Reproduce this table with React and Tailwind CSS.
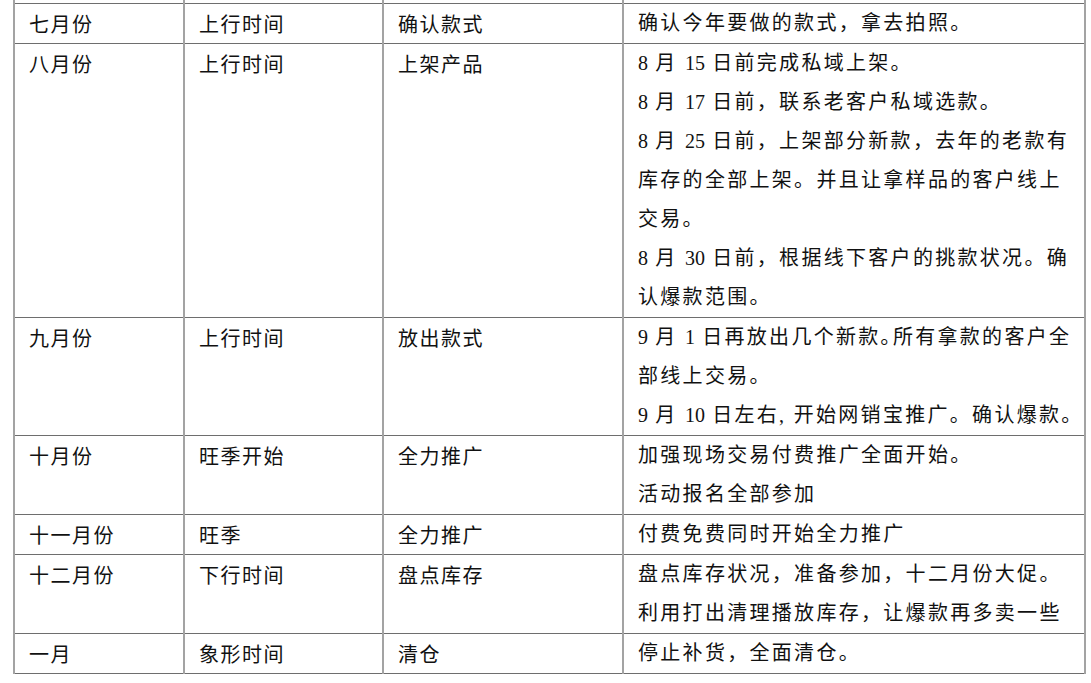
import React from "react";

const rows = [
    { month: "七月份", phase: "上行时间", task: "确认款式", notes: ["确认今年要做的款式，拿去拍照。"] },
    {
        month: "八月份",
        phase: "上行时间",
        task: "上架产品",
        notes: [
            "8 月 15 日前完成私域上架。",
            "8 月 17 日前，联系老客户私域选款。",
            "8 月 25 日前，上架部分新款，去年的老款有",
            "库存的全部上架。并且让拿样品的客户线上",
            "交易。",
            "8 月 30 日前，根据线下客户的挑款状况。确",
            "认爆款范围。",
        ],
    },
    {
        month: "九月份",
        phase: "上行时间",
        task: "放出款式",
        notes: [
            "9 月 1 日再放出几个新款｡所有拿款的客户全",
            "部线上交易。",
            "9 月 10 日左右, 开始网销宝推广。确认爆款。",
        ],
    },
    { month: "十月份", phase: "旺季开始", task: "全力推广", notes: ["加强现场交易付费推广全面开始。", "活动报名全部参加"] },
    { month: "十一月份", phase: "旺季", task: "全力推广", notes: ["付费免费同时开始全力推广"] },
    {
        month: "十二月份",
        phase: "下行时间",
        task: "盘点库存",
        notes: ["盘点库存状况，准备参加，十二月份大促。", "利用打出清理播放库存，让爆款再多卖一些"],
    },
    { month: "一月", phase: "象形时间", task: "清仓", notes: ["停止补货，全面清仓。"] },
];

const cell = "border-l-2 border-b border-l-[#a3a3a3] border-b-[#6e6e6e] align-top pl-[14px] pr-2 py-0";
const sans = "font-['Noto_Sans_CJK_SC',sans-serif] tracking-[1.5px]";
const serif = "font-['Liberation_Serif','Noto_Sans_CJK_SC',serif] tracking-[2.3px]";

// digits in the notes column sit tighter than the Chinese text
const Note = ({ text }) => (
    <div>
        {text.split(/(\d+)/).map((part, k) =>
            /^\d+$/.test(part) ? (
                <span key={k} className="tracking-normal">{part}</span>
            ) : (
                <React.Fragment key={k}>{part}</React.Fragment>
            )
        )}
    </div>
);

export default function App() {
    return (
        <div className="w-[1091px] h-[683px] bg-white overflow-hidden pl-[13px]">
            <table className="border-collapse text-[20px] leading-[39px] text-[#111] table-fixed w-[1071px]">
                <colgroup>
                    <col className="w-[170px]" />
                    <col className="w-[199px]" />
                    <col className="w-[240px]" />
                    <col className="w-[462px]" />
                </colgroup>
                <tbody>
                    {/* cut-off row above */}
                    <tr className="h-[3px]">
                        <td className="border-l-2 border-l-[#a3a3a3] border-b border-b-[#6e6e6e] p-0"></td>
                        <td className="border-l-2 border-l-[#a3a3a3] border-b border-b-[#6e6e6e] p-0"></td>
                        <td className="border-l-2 border-l-[#a3a3a3] border-b border-b-[#6e6e6e] p-0"></td>
                        <td className="border-x-2 border-x-[#a3a3a3] border-b border-b-[#6e6e6e] p-0"></td>
                    </tr>
                    {rows.map((r, i) => (
                        <tr key={i}>
                            <td className={`${cell} ${sans}`}>{r.month}</td>
                            <td className={`${cell} ${sans}`}>{r.phase}</td>
                            <td className={`${cell} ${sans}`}>{r.task}</td>
                            <td className={`${cell} ${serif} border-r-2 border-r-[#a3a3a3] whitespace-nowrap`}>
                                {r.notes.map((n, j) => (
                                    <Note key={j} text={n} />
                                ))}
                            </td>
                        </tr>
                    ))}
                </tbody>
            </table>
        </div>
    );
}
